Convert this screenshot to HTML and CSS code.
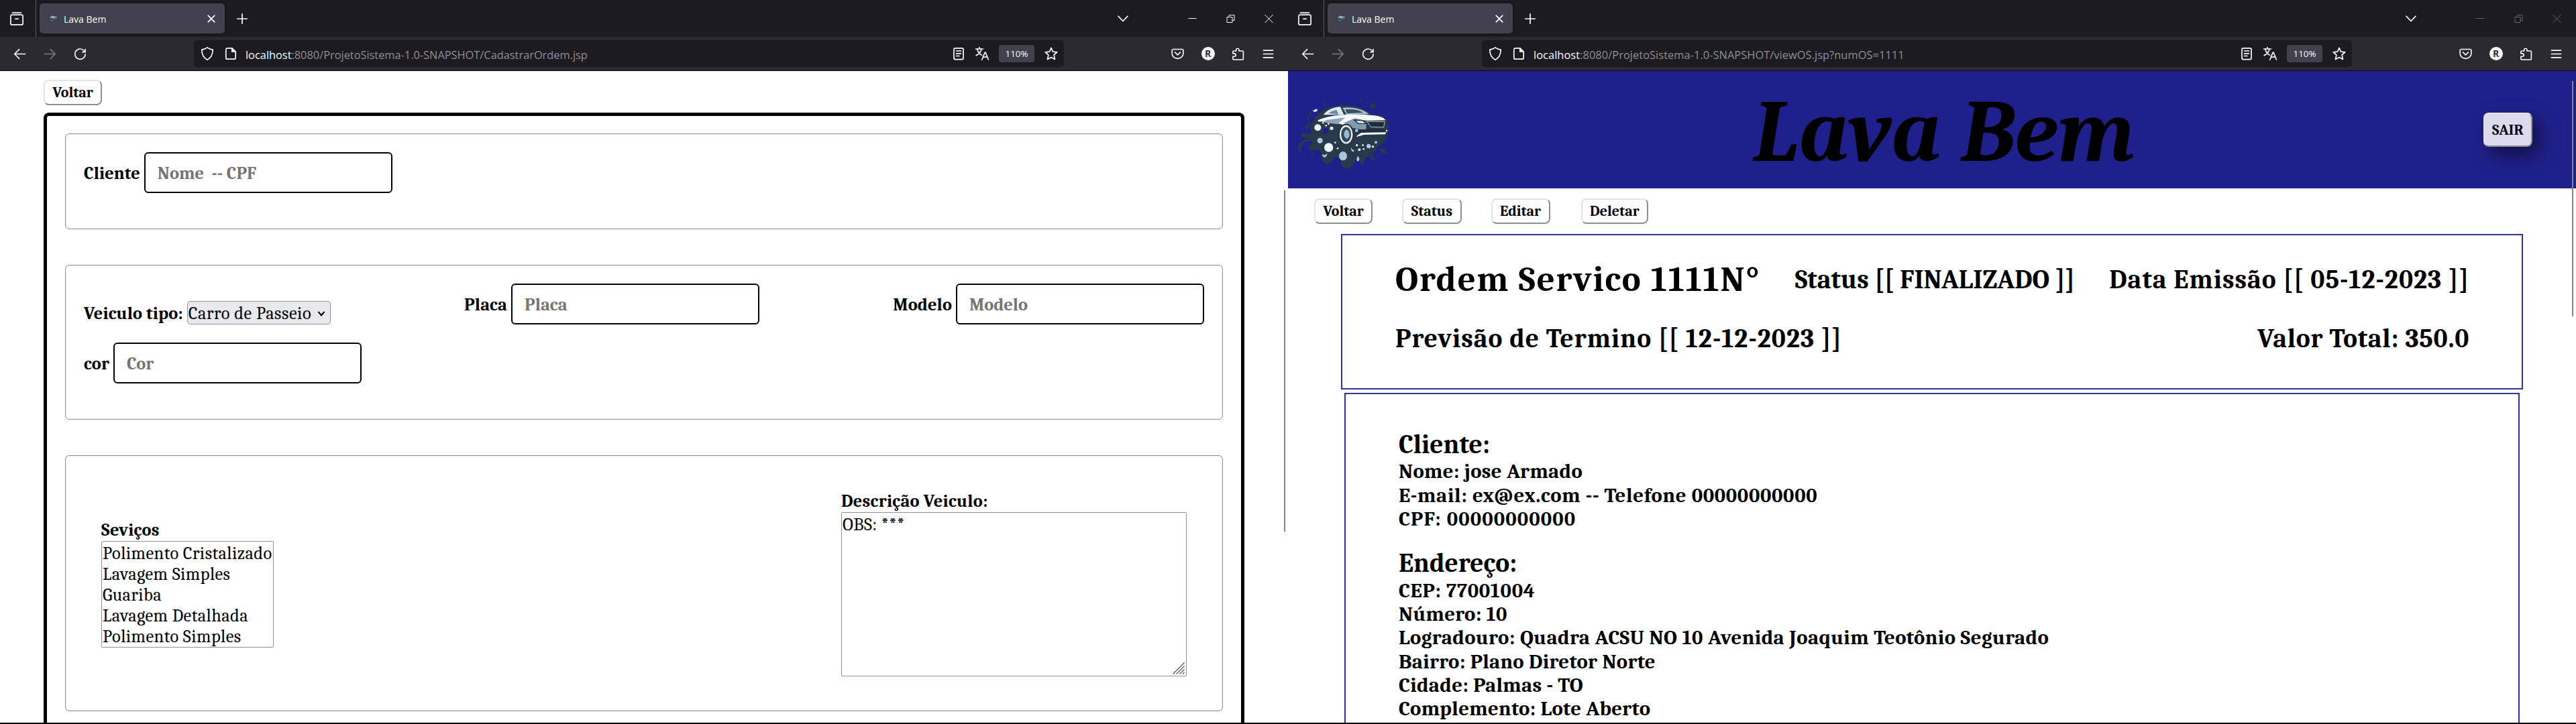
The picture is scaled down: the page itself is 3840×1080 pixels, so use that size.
FILE: index.html
```html
<!DOCTYPE html>
<html lang="pt-BR">
<head>
<meta charset="utf-8">
<title>Lava Bem</title>
<link rel="stylesheet" href="styles.css">
</head>
<body>
<svg class="sprite" aria-hidden="true">
  <symbol id="i-recent" viewBox="0 0 20 20"><path d="M3.5 1.1h13M2.5 4.1h15a1.8 1.8 0 0 1 1.6 1.8v11a2 2 0 0 1-2 2H2.9a2 2 0 0 1-2-2v-11a1.8 1.8 0 0 1 1.6-1.8zM8 10.2h4"/></symbol>
  <symbol id="i-x" viewBox="0 0 20 20"><path d="M5.2 5.2l9.6 9.6M14.8 5.2l-9.6 9.6"/></symbol>
  <symbol id="i-plus" viewBox="0 0 20 20"><path d="M10 2.8v14.4M2.8 10h14.4"/></symbol>
  <symbol id="i-down" viewBox="0 0 20 20"><path d="M3 6.2l7 7.3 7-7.3"/></symbol>
  <symbol id="i-min" viewBox="0 0 20 20"><path d="M4 9.5h12"/></symbol>
  <symbol id="i-restore" viewBox="0 0 20 20"><path d="M4.5 7.5h8v8h-8zM7.5 7.5v-3h8v8h-3"/></symbol>
  <symbol id="i-close" viewBox="0 0 20 20"><path d="M4 4l12 12M16 4L4 16"/></symbol>
  <symbol id="i-back" viewBox="0 0 20 20"><path d="M18.5 10H1.8M9 2.8L1.8 10 9 17.2"/></symbol>
  <symbol id="i-fwd" viewBox="0 0 20 20"><path d="M1.5 10h16.7M11 2.8l7.2 7.2-7.2 7.2"/></symbol>
  <symbol id="i-reload" viewBox="0 0 20 20"><path d="M18 10.3A8.1 8.1 0 1 1 14.6 3.6"/><path class="fill" d="M18.8 1.2v6.6h-6.6z"/></symbol>
  <symbol id="i-shield" viewBox="0 0 20 20"><path d="M10 .9c2.200 1.700 5 2.900 8.200 3.300 0 6.700-1.800 11.600-8.200 15-6.400-3.400-8.200-8.300-8.200-15C5 3.800 7.800 2.600 10 .9z"/></symbol>
  <symbol id="i-doc" viewBox="0 0 20 20"><path d="M12 1.800H4.800a2 2 0 0 0-2 2v12.400a2 2 0 0 0 2 2h10.400a2 2 0 0 0 2-2V7z"/><path class="fill" d="M11 1.500v6.300h6.300z"/></symbol>
  <symbol id="i-reader" viewBox="0 0 20 20"><rect x="3" y="1.800" width="14" height="16.800" rx="2"/><path d="M6.500 6h7M6.500 9.800h7M6.500 13.500h4.500"/></symbol>
  <symbol id="i-translate" viewBox="0 0 20 20"><path d="M.5 3h10.800M5.800.3V3M9 3.200C8 7.500 5 10.800 1.200 12.800M2.800 3.500c1 4 3.600 7.200 6.600 8.800M9.800 19l4.500-11h.6l4.600 11M11.500 15.200h6.300"/></symbol>
  <symbol id="i-star" viewBox="0 0 20 20"><path d="M10 1.400l2.500 5.700 6.300.7-4.700 4.200 1.400 6.500L10 15.500l-5.500 3 1.400-6.500L1.200 7.800l6.300-.7z"/></symbol>
  <symbol id="i-pocket" viewBox="0 0 20 20"><path d="M3 2.600h14a1.800 1.800 0 0 1 1.800 1.800v5.100a8.800 7.700 0 0 1-17.600 0V4.400A1.800 1.800 0 0 1 3 2.600zM5.800 7.300l4.200 4.300 4.200-4.300"/></symbol>
  <symbol id="i-puzzle" viewBox="0 0 20 20"><path d="M2 8V6.700a1.500 1.500 0 0 1 1.500-1.500H7V3.500a2.200 2.200 0 0 1 4.400 0v1.700h5.400a1.500 1.500 0 0 1 1.500 1.500v10.800a1.500 1.500 0 0 1-1.500 1.500H3.500A1.500 1.500 0 0 1 2 17.500V14h2.200a2.200 2.200 0 0 0 0-4.600H2z"/></symbol>
  <symbol id="i-menu" viewBox="0 0 20 20"><path d="M2.500 4.300h15M2.500 10h15M2.500 15.700h15"/></symbol>
  <symbol id="logo" viewBox="0 0 510 360">
    <g fill="#28394c">
      <path d="M120 132c14-38 60-60 120-63 60-2 96 12 132 40 40 4 66 12 72 28 10 24 6 60-2 78-10 24-30 38-56 46 14 8 30 4 40-2-6 14 14 22 8 24-16 4-20-14-34-18-10 18-28 16-26 30 2 12 18 12 16 20-12 6-20-6-26-22-12 6-22 14-22 30-4 16-22 8-18-4-8-22-24-14-28 6-14 40-50 36-58 6-8-32-28-38-34-26-4 22-32 32-44 22-18-14-2-34-14-52-22-16-44 6-54-14-2-12 22-16 18-28-24-10-50 4-54 34 0 10-12 8-12-2 0-28 26-46 58-48-22-2-48-4-44-18 10-12 36 0 48-8-12-14-2-40 10-59z"/>
      <circle cx="164" cy="65" r="7"/><circle cx="323" cy="48" r="5"/><circle cx="358" cy="57" r="5"/><circle cx="382" cy="73" r="12"/><circle cx="86" cy="165" r="10"/><circle cx="108" cy="286" r="6"/><circle cx="426" cy="272" r="10"/><circle cx="434" cy="281" r="6"/>
    </g>
    <path d="M98 156c-16-30-2-60 22-64" fill="none" stroke="#28394c" stroke-width="6"/>
    <path d="M110 94l18-9 5 7-12 8z" fill="#e9f1f6"/>
    <path d="M158 112c20-26 48-34 76-36l16 36z" fill="#dce8ef"/>
    <path d="M182 106c8-10 20-14 36-16l8 20z" fill="#6f8da3"/>
    <path d="M244 80c50-6 90 6 118 28l-100 4z" fill="#a9c0cf"/>
    <path d="M256 88c36-4 60 2 82 14l-74 4z" fill="#394f63"/>
    <path d="M134 136c50-26 160-32 240-22 34 2 56 10 62 22l-84 2-54-10-44 30-54-14-66-2z" fill="#f4f8fa"/>
    <path d="M166 136l90-12-36 30-54-8z" fill="#8ba5b7"/>
    <path d="M250 148l46-20 56 14-4 38-40-6-40-8z" fill="#7e9bb0"/>
    <path d="M290 132l50 6 18 16-46-2z" fill="#24313f"/><path d="M304 138l30 2 10 10-30-2z" fill="#eef5f8"/>
    <path d="M354 142h78l-4 26-58-2z" fill="#1d2b3a" stroke="#b3c6d2" stroke-width="3"/>
    <path d="M300 178h140v10H318z" fill="#1d2b3a"/>
    <path d="M310 204l18-12 112-2-6 9-94 2-34 10z" fill="#f4f8fa"/>
    <ellipse cx="260" cy="198" rx="35" ry="46" fill="#24313f"/>
    <ellipse cx="260" cy="200" rx="26" ry="38" fill="#31475a" stroke="#eef5f8" stroke-width="7"/>
    <path d="M262 178c14 4 18 30 4 42-20-4-20-36-4-42z" fill="#9eb9cb"/>
    <g fill="#eef5f8"><circle cx="133" cy="169" r="15"/><circle cx="195" cy="172" r="8"/><circle cx="182" cy="258" r="20"/><circle cx="170" cy="160" r="4"/><circle cx="181" cy="152" r="4"/><circle cx="157" cy="148" r="4"/><circle cx="308" cy="248" r="5"/><circle cx="319" cy="268" r="6"/><circle cx="335" cy="248" r="4"/><circle cx="338" cy="265" r="4"/><circle cx="211" cy="236" r="4"/><circle cx="222" cy="262" r="4"/><circle cx="380" cy="254" r="5"/><circle cx="441" cy="183" r="4"/></g>
    <g fill="#a9c6db"><ellipse cx="246" cy="296" rx="18" ry="20"/><circle cx="143" cy="227" r="12"/><circle cx="361" cy="252" r="10"/><circle cx="307" cy="182" r="7"/><circle cx="393" cy="235" r="6"/><path d="M152 288c8 6 16 4 24-4-2 18-18 28-24 4zM283 258c2 8 8 12 14 14-4 10-18 2-14-14zM313 296c-8 10-8 20 0 24 8-4 8-14 0-24z"/></g>
    <circle cx="167" cy="184" r="12" fill="#20208c"/>
  </symbol>
</svg>

<div class="screens">
  <section class="window">
    <div class="tabbar">
      <span class="recent"><svg class="icon"><use href="#i-recent"/></svg></span>
      <div class="tab"><svg class="favicon"><use href="#logo"/></svg><span class="tab-title">Lava Bem</span><svg class="icon"><use href="#i-x"/></svg></div>
      <svg class="icon newtab"><use href="#i-plus"/></svg>
      <svg class="icon alltabs"><use href="#i-down"/></svg>
      <div class="controls"><svg class="icon thin"><use href="#i-min"/></svg><svg class="icon thin"><use href="#i-restore"/></svg><svg class="icon thin"><use href="#i-close"/></svg></div>
    </div>
    <div class="toolbar">
      <div class="tools"><svg class="icon"><use href="#i-back"/></svg><svg class="icon dim"><use href="#i-fwd"/></svg><svg class="icon"><use href="#i-reload"/></svg></div>
      <div class="urlbar">
        <svg class="icon"><use href="#i-shield"/></svg><svg class="icon"><use href="#i-doc"/></svg>
        <span class="url url-form"><b>localhost</b>:8080/ProjetoSistema-1.0-SNAPSHOT/CadastrarOrdem.jsp</span>
        <svg class="icon"><use href="#i-reader"/></svg><svg class="icon"><use href="#i-translate"/></svg><span class="zoom">110%</span><svg class="icon"><use href="#i-star"/></svg>
      </div>
      <div class="tools"><svg class="icon"><use href="#i-pocket"/></svg><span class="avatar">R</span><svg class="icon"><use href="#i-puzzle"/></svg><svg class="icon"><use href="#i-menu"/></svg></div>
    </div>
    <main class="page page-form">
      <button class="btn">Voltar</button>
      <form class="order">
        <div class="group group-client">
          <label class="field">Cliente <input class="input" placeholder="Nome  -- CPF"></label>
        </div>
        <div class="group group-vehicle">
          <div class="row">
            <label class="field">Veiculo tipo:
              <span class="select">Carro de Passeio<svg class="caret" viewBox="0 0 12 8"><path d="M1.500 1l4.500 5.500L10.500 1"/></svg></span>
            </label>
            <label class="field">Placa <input class="input" placeholder="Placa"></label>
            <label class="field">Modelo <input class="input" placeholder="Modelo"></label>
          </div>
          <label class="field">cor <input class="input" placeholder="Cor"></label>
        </div>
        <div class="group group-services">
          <div class="services">
            <span class="label">Seviços</span>
            <ul class="list"><li>Polimento Cristalizado</li><li>Lavagem Simples</li><li>Guariba</li><li>Lavagem Detalhada</li><li>Polimento Simples</li></ul>
          </div>
          <div class="notes">
            <span class="label">Descrição Veiculo:</span>
            <div class="notes-box"><textarea class="textarea">OBS: ***</textarea><svg class="grip" viewBox="0 0 18 18"><path d="M.5 17.500l17-17M5.500 17.500l12-12M10.500 17.500l7-7M15 17.500l2.500-2.500"/></svg></div>
          </div>
        </div>
      </form>
      <span class="thumb thumb-form"></span>
    </main>
  </section>

  <section class="window">
    <div class="tabbar">
      <span class="recent"><svg class="icon"><use href="#i-recent"/></svg></span>
      <div class="tab"><svg class="favicon"><use href="#logo"/></svg><span class="tab-title">Lava Bem</span><svg class="icon"><use href="#i-x"/></svg></div>
      <svg class="icon newtab"><use href="#i-plus"/></svg>
      <svg class="icon alltabs"><use href="#i-down"/></svg>
      <div class="controls inactive"><svg class="icon thin"><use href="#i-min"/></svg><svg class="icon thin"><use href="#i-restore"/></svg><svg class="icon thin"><use href="#i-close"/></svg></div>
    </div>
    <div class="toolbar">
      <div class="tools"><svg class="icon"><use href="#i-back"/></svg><svg class="icon dim"><use href="#i-fwd"/></svg><svg class="icon"><use href="#i-reload"/></svg></div>
      <div class="urlbar">
        <svg class="icon"><use href="#i-shield"/></svg><svg class="icon"><use href="#i-doc"/></svg>
        <span class="url"><b>localhost</b>:8080/ProjetoSistema-1.0-SNAPSHOT/viewOS.jsp?numOS=1111</span>
        <svg class="icon"><use href="#i-reader"/></svg><svg class="icon"><use href="#i-translate"/></svg><span class="zoom">110%</span><svg class="icon"><use href="#i-star"/></svg>
      </div>
      <div class="tools"><svg class="icon"><use href="#i-pocket"/></svg><span class="avatar">R</span><svg class="icon"><use href="#i-puzzle"/></svg><svg class="icon"><use href="#i-menu"/></svg></div>
    </div>
    <main class="page">
      <header class="banner">
        <svg class="logo"><use href="#logo"/></svg>
        <h1 class="brand">Lava Bem</h1>
        <button class="btn exit">SAIR</button>
      </header>
      <nav class="actions">
        <button class="btn">Voltar</button><button class="btn">Status</button><button class="btn">Editar</button><button class="btn delete">Deletar</button>
      </nav>
      <section class="summary">
        <div class="line"><h2 class="number">Ordem Servico 1111N°</h2><span>Status [[ FINALIZADO ]]</span><span class="wide">Data Emissão [[ 05-12-2023 ]]</span></div>
        <div class="line"><span class="wide">Previsão de Termino [[ 12-12-2023 ]]</span><span class="total">Valor Total: 350.0</span></div>
      </section>
      <section class="details">
        <h3 class="heading">Cliente:</h3>
        <p>Nome: jose Armado</p>
        <p class="digits">E-mail: ex@ex.com -- Telefone 00000000000</p>
        <p class="cpf">CPF: 00000000000</p>
        <h3 class="heading address">Endereço:</h3>
        <p class="digits">CEP: 77001004</p>
        <p>Número: 10</p>
        <p class="street">Logradouro: Quadra ACSU NO 10 Avenida Joaquim Teotônio Segurado</p>
        <p>Bairro: Plano Diretor Norte</p>
        <p>Cidade: Palmas - TO</p>
        <p>Complemento: Lote Aberto</p>
      </section>
      <span class="thumb thumb-view"></span>
    </main>
  </section>
</div>
</body>
</html>
```
FILE: styles.css
```css
* { box-sizing: border-box; }
body { margin: 0; background: #fff; color: #000; font-family: Cambria, Caladea, "Liberation Serif", serif; }
h1, h2, h3, p, ul { margin: 0; padding: 0; }
.sprite { display: none; }
.screens { display: grid; grid-template-columns: 1920px 1920px; width: 3840px; height: 1080px; overflow: hidden; }
.window { display: flex; flex-direction: column; height: 1080px; border-bottom: 2px solid #000; overflow: hidden; }

/* Browser chrome */
.tabbar, .toolbar { display: flex; align-items: center; flex: none; color: #fbfbfe; font-family: "Open Sans", sans-serif; }
.tabbar { height: 55px; background: #1c1b22; }
.icon { width: 20px; height: 20px; flex: none; fill: none; stroke: currentColor; stroke-width: 1.7; stroke-linecap: round; stroke-linejoin: round; overflow: visible; }
.icon.thin { stroke-width: 1; stroke-linecap: butt; stroke-linejoin: miter; }
.fill { fill: currentColor; stroke: none; }
.recent { display: flex; align-items: center; width: 54px; height: 55px; padding-left: 15px; border-right: 1px solid #5b5a63; }
.tab { display: flex; align-items: center; width: 276px; height: 45px; margin-left: 5px; padding: 0 10px 0 11px; border-radius: 5px; background: #42414d; box-shadow: 0 0 4px #0008; }
.favicon { width: 18px; height: 13px; margin-right: 7px; }
.tab-title { flex: 1; font-size: 14px; line-height: 20px; padding-top: 2px; }
.newtab { margin-left: 16px; }
.alltabs { margin-left: auto; margin-right: 65px; }
.controls { display: flex; }
.controls .icon { width: 57px; }
.inactive { color: #64636a; }
.toolbar { height: 51px; border-bottom: 1px solid #0c0c0d; background: #2b2a33; padding: 0 7px; }
.tools { display: flex; }
.tools .icon { width: 45px; height: 19px; }
.tools .icon.dim { color: #7b7a82; }
.urlbar { display: flex; align-items: center; height: 40px; width: 1297px; margin-left: 147px; margin-right: auto; padding: 0 9px 0 10px; border-radius: 5px; background: #1c1b22; gap: 15px; }
.url { flex: 1; margin-left: -3px; padding-top: 2px; font-size: 16.4px; letter-spacing: .05px; color: #8f8f96; white-space: nowrap; }
.url b { font-weight: 400; color: #fbfbfe; }
.url-form { letter-spacing: -.02px; }
.zoom { width: 53px; height: 26px; border-radius: 4px; background: #42414d; font-size: 13.3px; line-height: 27px; text-align: center; }
.avatar { width: 20px; height: 20px; margin: -1px 12.500px; border-radius: 50%; background: #fbfbfe; color: #2b2a33; font: 700 14px/20px "Open Sans", sans-serif; text-align: center; }

/* Shared page pieces */
.page { position: relative; flex: 1; min-height: 0; overflow: hidden; }
.btn { height: 38px; padding: 0 11.500px; border: 2px outset #e3e3e3; border-radius: 8px; background: #fff; color: #000; font: bold 22px/30px Cambria, Caladea, "Liberation Serif", serif; }
.thumb { position: absolute; right: 4px; width: 2px; background: #868686; }
.thumb-form { top: 178px; height: 509px; }
.thumb-view { top: 15px; height: 351px; }

/* Order form */
.page-form { padding: 13px 65px 0; }
.order { display: flex; flex-direction: column; height: 1100px; margin-top: 11px; padding: 26px 27px; border: 5px solid #000; border-radius: 8px; gap: 53px; }
.page-form > .btn { display: block; }
.group { flex: none; border: 1px solid #959595; border-radius: 6px; box-shadow: inset 0 0 0 1px #efefef; padding: 27px 27px; }
.group-client { height: 143px; }
.group-vehicle { height: 231px; display: flex; flex-direction: column; align-items: flex-start; gap: 27px; }
.group-services { height: 382px; display: flex; justify-content: space-between; align-items: center; padding: 0 53px; }
.row { display: flex; justify-content: space-between; align-items: flex-end; width: 100%; }
.field { display: flex; align-items: baseline; gap: 6px; font-weight: 700; font-size: 26.4px; letter-spacing: .1px; }
.input { width: 370px; height: 61px; padding: 1px 18px 0; border: 2px solid #000; border-radius: 6px; background: #fff; font: inherit; outline: 0; }
.input::placeholder { color: #757575; opacity: 1; }
.select { position: relative; width: 214px; height: 35px; padding-left: 1px; border: 1px solid #8f8f9d; border-radius: 5px; background: #e9e9ed; font-weight: 400; line-height: 35px; letter-spacing: .55px; white-space: nowrap; }
.caret { position: absolute; right: 7px; top: 14px; width: 12px; height: 8px; fill: none; stroke: #000; stroke-width: 2; }
.label { display: block; font-weight: 700; font-size: 26.4px; line-height: 32px; letter-spacing: .25px; }
.services { margin-top: 1px; }
.list { width: 257px; height: 159px; padding: 2px 0 0 1px; border: 1px solid #8f8f9d; border-radius: 2px; list-style: none; font-size: 26.4px; line-height: 31px; letter-spacing: .45px; white-space: nowrap; }
.notes-box { position: relative; height: 245px; }
.textarea { display: block; width: 515px; height: 245px; padding: 2px 1px; border: 1px solid #8f8f9d; border-radius: 2px; resize: none; outline: 0; letter-spacing: .4px; font: 26.4px/31px Cambria, Caladea, "Liberation Serif", serif; }
.grip { position: absolute; right: 3px; bottom: 3px; width: 18px; height: 18px; fill: none; stroke: #555; stroke-width: 1.2; }

/* Order view */
.banner { display: flex; align-items: center; height: 175px; padding-right: 65px; background: #20208c; }
.logo { width: 170px; height: 120px; }
.brand { flex: 1; padding: 6px 0 0 4px; font-size: 132px; font-style: italic; font-weight: 700; line-height: 154px; text-align: center; }
.exit { height: 51px; background: #dcdaec; box-shadow: 10px 12px 28px rgba(0, 0, 0, .5); }
.actions { display: flex; gap: 44px; padding: 15px 39px; }
.delete { margin-left: 2px; }
.summary { height: 232px; margin: 0 79px; padding: 35px 78px 0 79px; border: 2px solid #33338f; font-weight: 700; font-size: 39.6px; }
.line { display: flex; justify-content: space-between; align-items: center; line-height: 46px; margin-bottom: 34px; white-space: nowrap; }
.number { font-size: 52.8px; line-height: 62px; letter-spacing: 1.75px; }
.wide { letter-spacing: 1px; }
.total { letter-spacing: .7px; }
.details { height: 600px; margin: 5px 84px 0; padding: 53px 79px; border: 2px solid #33338f; font-weight: 700; font-size: 30.8px; line-height: 35.3px; letter-spacing: .28px; }
.details p { white-space: nowrap; }
.details .digits { letter-spacing: .64px; }
.details .cpf { letter-spacing: 1.1px; }
.details .street { letter-spacing: .4px; }
.heading { font-size: 39.6px; line-height: 45.4px; letter-spacing: 0; }
.address { margin-top: 26px; }
```
